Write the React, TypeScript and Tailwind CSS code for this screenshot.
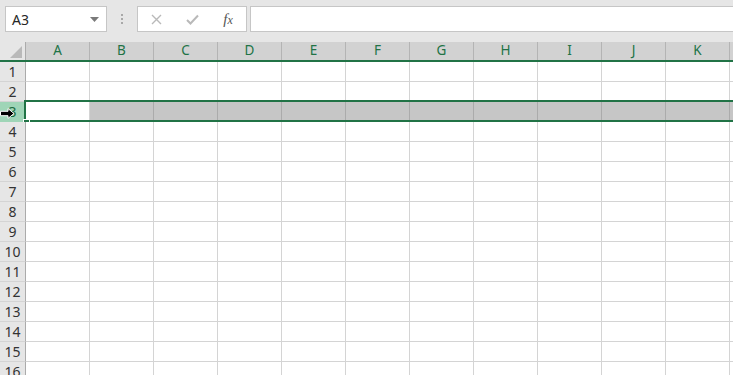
import React from 'react';

const COLS = ['A', 'B', 'C', 'D', 'E', 'F', 'G', 'H', 'I', 'J', 'K', 'L'];
const ROWS = Array.from({ length: 16 }, (_, i) => i + 1);
const SELECTED = 3;

const RowArrow = () => (
    <svg width="15" height="11" viewBox="0 0 15 11" className="absolute left-0 top-[6px]">
        <path d="M0.5 3.3 H8 V0.6 L14 5.5 L8 10.4 V7.7 H0.5 Z" fill="#000" stroke="#fff" strokeWidth="1" />
    </svg>
);

const FormulaBar: React.FC = () => (
    <div className="flex h-[42px] items-start bg-[#e6e6e6] pt-[6px]">
        <div className="ml-[5px] flex h-[26px] w-[102px] items-center justify-between border border-[#c6c6c6] bg-white pl-[6px] pr-[7px]">
            <span className="text-[14px] text-[#262626]">A3</span>
            <svg width="9" height="5" viewBox="0 0 9 5">
                <path d="M0 0 H9 L4.5 5 Z" fill="#7a7a7a" />
            </svg>
        </div>
        <div className="flex h-[26px] w-[30px] flex-col items-center justify-center gap-[2px]">
            <span className="h-[2px] w-[2px] bg-[#a8a8a8]" />
            <span className="h-[2px] w-[2px] bg-[#a8a8a8]" />
            <span className="h-[2px] w-[2px] bg-[#a8a8a8]" />
        </div>
        <div className="grid h-[26px] w-[110px] grid-cols-3 items-center border border-[#c6c6c6] bg-white">
            <div className="flex justify-center">
                <svg width="11" height="11" viewBox="0 0 11 11">
                    <path d="M1 1 L10 10 M10 1 L1 10" stroke="#b9b9b9" strokeWidth="1.4" />
                </svg>
            </div>
            <div className="flex justify-center">
                <svg width="13" height="11" viewBox="0 0 13 11">
                    <path d="M1 6 L4.5 9.5 L12 1.5" stroke="#b9b9b9" strokeWidth="2" fill="none" />
                </svg>
            </div>
            <div className="flex justify-center">
                <span className="font-['Liberation_Serif',serif] text-[15px] italic leading-none text-[#555]">
                    f<span className="text-[12px]">x</span>
                </span>
            </div>
        </div>
        <div className="ml-[3px] h-[26px] flex-1 border border-r-0 border-[#c6c6c6] bg-white" />
    </div>
);

export default function App() {
    return (
        <div className="h-[375px] w-[733px] overflow-hidden bg-white font-['Noto_Sans','Open_Sans',sans-serif]">
            <FormulaBar />

            {/* column headers */}
            <div className="flex h-[20px] w-max border-b-2 border-[#217346]">
                <div className="relative w-[26px] shrink-0 border-r border-[#ababab] bg-[#e6e6e6]">
                    <svg width="12" height="12" viewBox="0 0 12 12" className="absolute bottom-[2px] right-[3px]">
                        <path d="M12 0 V12 H0 Z" fill="#b9b9b9" />
                    </svg>
                </div>
                {COLS.map((c) => (
                    <div
                        key={c}
                        className="flex w-[64px] shrink-0 items-center justify-center border-r border-[#b4b4b4] bg-[#d2d2d2] text-[13.5px] leading-none text-[#217346]"
                    >
                        {c !== 'L' && c}
                    </div>
                ))}
            </div>

            {/* rows */}
            {ROWS.map((r) => {
                const sel = r === SELECTED;
                return (
                    <div key={r} className="relative flex h-[20px] w-max">
                        <div
                            className={
                                sel
                                    ? 'relative flex w-[26px] shrink-0 items-center justify-center border-b border-r border-[#9fd5b7] bg-[#9fd5b7] text-[14px] text-[#1d6b40]'
                                    : 'flex w-[26px] shrink-0 items-center justify-center border-b border-r border-b-[#d4d4d4] border-r-[#ababab] bg-[#e6e6e6] text-[14px] text-[#333]'
                            }
                        >
                            {r}
                            {sel && <RowArrow />}
                        </div>
                        {COLS.map((c, i) => (
                            <div
                                key={c}
                                className={
                                    sel && i > 0
                                        ? 'w-[64px] shrink-0 border-b border-r border-[#ababab] bg-[#c6c6c6]'
                                        : 'w-[64px] shrink-0 border-b border-r border-[#d4d4d4] bg-white'
                                }
                            />
                        ))}
                        {sel && (
                            <>
                                <div className="pointer-events-none absolute -top-[2px] bottom-0 left-[24px] right-0 border-2 border-r-0 border-[#217346]" />
                                <div className="absolute left-[23px] top-[17px] h-[6px] w-[7px] border border-white bg-[#217346]" />
                            </>
                        )}
                    </div>
                );
            })}
        </div>
    );
}
